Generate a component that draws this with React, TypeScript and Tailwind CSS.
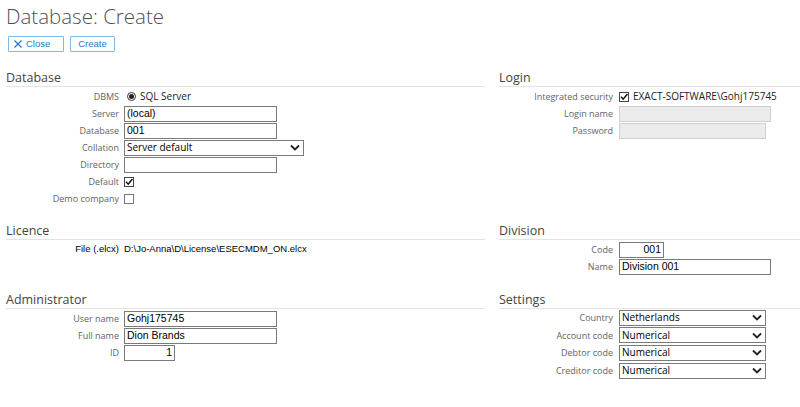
import React from "react";

const OS = { fontFamily: '"Open Sans", "Noto Sans", sans-serif' } as const;
const AR = { fontFamily: '"Liberation Sans", Arial, sans-serif' } as const;

function Chevron() {
  return (
    <svg width="10" height="7" viewBox="0 0 10 7" className="shrink-0">
      <path d="M1 1.5 L5 5.5 L9 1.5" fill="none" stroke="#222" strokeWidth="1.8" />
    </svg>
  );
}

function Check({ checked }: { checked: boolean }) {
  return (
    <span className={"relative inline-block w-[10px] h-[10px] border bg-white " + (checked ? "border-[#444]" : "border-[#777]")}>
      {checked && (
        <svg width="10" height="10" viewBox="0 0 10 10" className="absolute left-[-1px] top-[-1px]">
          <path d="M2 4.8 L4.2 7.2 L8.4 2" fill="none" stroke="#111" strokeWidth="1.5" />
        </svg>
      )}
    </span>
  );
}

function Heading({ children }: { children: React.ReactNode }) {
  return (
    <div style={OS} className="h-[18px] leading-[17px] text-[12.5px] text-[#444] border-b border-[#e3e3e3]">
      {children}
    </div>
  );
}

function Row({
  label,
  right,
  tall,
  labelStyle,
  children,
}: {
  label: string;
  right?: boolean;
  tall?: boolean;
  labelStyle?: "file";
  children: React.ReactNode;
}) {
  return (
    <div className={"flex items-center " + (tall ? "h-[17.6px]" : "h-[17px]") + " " + (right ? "gap-[6px]" : "gap-[5px]")}>
      {labelStyle === "file" ? (
        <div style={AR} className={"text-right text-[9.5px] text-black " + (right ? "w-[114px]" : "w-[113px]")}>
          {label}
        </div>
      ) : (
        <div style={OS} className={"text-right text-[9px] text-[#636363] whitespace-nowrap " + (right ? "w-[114px]" : "w-[113px]")}>
          {label}
        </div>
      )}
      <div className="flex items-center">{children}</div>
    </div>
  );
}

function Input({ value, w, align, disabled }: { value?: string; w: string; align?: "right"; disabled?: boolean }) {
  return (
    <div
      style={AR}
      className={
        "h-[16px] border flex items-center px-[2px] text-[10.5px] text-black " +
        w +
        " " +
        (disabled ? "bg-[#ebebeb] border-[#cfcfcf]" : "bg-white border-[#7a7a7a]") +
        " " +
        (align === "right" ? "justify-end" : "")
      }
    >
      {value}
    </div>
  );
}

function Select({ value, w }: { value: string; w: string }) {
  return (
    <div
      style={OS}
      className={"h-[16px] border border-[#7a7a7a] bg-white flex items-center justify-between pl-[2px] pr-[3px] text-[10px] text-black " + w}
    >
      <span>{value}</span>
      <Chevron />
    </div>
  );
}

export default function App() {
  return (
    <div className="w-[800px] h-[407px] bg-white overflow-hidden pt-[2px]">
      <div style={OS} className="h-[28px] leading-[28px] pl-[6px] text-[20.5px] font-light text-[#505050]">
        Database: Create
      </div>
      <div className="flex gap-[6px] pl-[8px] mt-[6px]">
        <button
          style={AR}
          className="h-[16px] w-[56px] border border-[#7cbbe8] flex items-center pl-[5px] gap-[4px] text-[9.5px] text-[#2a78c2] rounded-[1px]"
        >
          <svg width="8" height="8" viewBox="0 0 8 8">
            <path d="M0.5 0.5 L7.5 7.5 M7.5 0.5 L0.5 7.5" stroke="#2a78c2" strokeWidth="1.2" />
          </svg>
          Close
        </button>
        <button
          style={AR}
          className="h-[16px] w-[45px] border border-[#7cbbe8] flex items-center justify-center text-[9.5px] text-[#2a78c2] rounded-[1px]"
        >
          Create
        </button>
      </div>

      <div className="grid grid-cols-[479px_301px] gap-x-[14px] pl-[6px] mt-[17px]">
        {/* Database */}
        <div>
          <Heading>Database</Heading>
          <div className="pt-[1px]">
            <Row label="DBMS">
              <span className="inline-flex items-center justify-center w-[9px] h-[9px] rounded-full border border-[#333] ml-[3px]">
                <span className="w-[5px] h-[5px] rounded-full bg-[#222]" />
              </span>
              <span style={OS} className="ml-[4px] text-[10px] text-[#222]">SQL Server</span>
            </Row>
            <Row label="Server">
              <Input value="(local)" w="w-[153px]" />
            </Row>
            <Row label="Database">
              <Input value="001" w="w-[153px]" />
            </Row>
            <Row label="Collation">
              <Select value="Server default" w="w-[180px]" />
            </Row>
            <Row label="Directory">
              <Input value="" w="w-[153px]" />
            </Row>
            <Row label="Default">
              <Check checked />
            </Row>
            <Row label="Demo company">
              <Check checked={false} />
            </Row>
          </div>
        </div>

        {/* Login */}
        <div>
          <Heading>Login</Heading>
          <div className="pt-[1px]">
            <Row label="Integrated security" right>
              <Check checked />
              <span style={OS} className="ml-[4px] text-[10px] text-[#222]">EXACT-SOFTWARE\Gohj175745</span>
            </Row>
            <Row label="Login name" right>
              <Input w="w-[152px]" disabled />
            </Row>
            <Row label="Password" right>
              <Input w="w-[147px]" disabled />
            </Row>
          </div>
        </div>

        {/* Licence */}
        <div className="mt-[15px]">
          <Heading>Licence</Heading>
          <div className="pt-[1px]">
            <Row label="File (.elcx)" labelStyle="file">
              <span style={AR} className="text-[9.5px] text-black">D:\Jo-Anna\D\License\ESECMDM_ON.elcx</span>
            </Row>
          </div>
        </div>

        {/* Division */}
        <div className="mt-[15px]">
          <Heading>Division</Heading>
          <div className="pt-[1px]">
            <Row label="Code" right>
              <Input value="001" w="w-[45px]" align="right" />
            </Row>
            <Row label="Name" right>
              <Input value="Division 001" w="w-[152px]" />
            </Row>
          </div>
        </div>

        {/* Administrator */}
        <div className="mt-[16px]">
          <Heading>Administrator</Heading>
          <div className="pt-[1px]">
            <Row label="User name">
              <Input value="Gohj175745" w="w-[153px]" />
            </Row>
            <Row label="Full name">
              <Input value="Dion Brands" w="w-[153px]" />
            </Row>
            <Row label="ID">
              <Input value="1" w="w-[51px]" align="right" />
            </Row>
          </div>
        </div>

        {/* Settings */}
        <div className="mt-[16px]">
          <Heading>Settings</Heading>
          <div>
            <Row label="Country" right tall>
              <Select value="Netherlands" w="w-[147px]" />
            </Row>
            <Row label="Account code" right tall>
              <Select value="Numerical" w="w-[147px]" />
            </Row>
            <Row label="Debtor code" right tall>
              <Select value="Numerical" w="w-[147px]" />
            </Row>
            <Row label="Creditor code" right tall>
              <Select value="Numerical" w="w-[147px]" />
            </Row>
          </div>
        </div>
      </div>
    </div>
  );
}
